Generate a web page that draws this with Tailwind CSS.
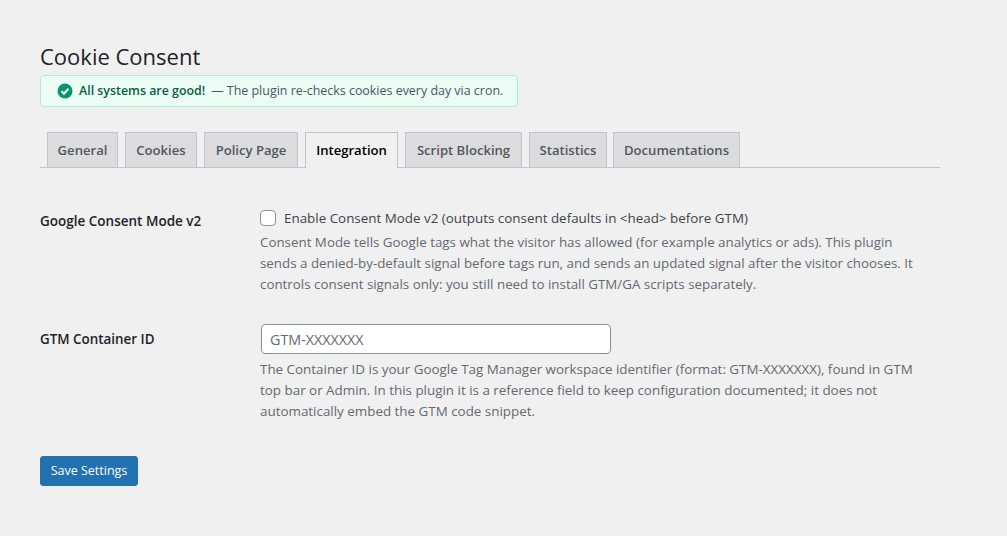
<!DOCTYPE html>
<html lang="en">
<head>
    <title>Cookie Consent</title>
    <script src="https://cdn.jsdelivr.net/npm/@tailwindcss/browser@4"></script>
</head>
<body class="bg-[#f0f0f1] text-[#3c434a] font-['Open_Sans','Noto_Sans',sans-serif] text-[13px] h-[536px] overflow-hidden">
    <div class="w-[900px] ml-[40px] pt-[42px]">
        <h1 class="text-[22px] leading-[29px] font-normal text-[#1d2327]">Cookie Consent</h1>

        <div class="mt-[4px] w-[478px] h-[32px] flex items-center pl-[16px] bg-[#ecfdf5] border border-[#a7f3d0] rounded-[4px] whitespace-nowrap">
            <svg class="w-[16px] h-[16px] shrink-0" viewBox="0 0 16 16">
                <circle cx="8" cy="8" r="7.5" fill="#059669"/>
                <path d="M4.5 8.3l2.4 2.4 4.6-5" fill="none" stroke="#fff" stroke-width="2"/>
            </svg>
            <strong class="ml-[6px] font-semibold text-[#065f46] text-[12.4px]">All systems are good!</strong>
            <span class="ml-[6px] text-[#4b5563] text-[12.45px]">— The plugin re-checks cookies every day via cron.</span>
        </div>

        <div class="mt-[25px] h-[36px] flex gap-[7px] pl-[7px] border-b border-[#c3c4c7] text-[13.1px] leading-[35px] font-semibold text-[#50575e] whitespace-nowrap">
            <a class="w-[71px] text-center h-[35px] bg-[#dcdcde] border border-[#c3c4c7] border-b-0">General</a>
            <a class="w-[72px] text-center h-[35px] bg-[#dcdcde] border border-[#c3c4c7] border-b-0">Cookies</a>
            <a class="w-[94px] text-center h-[35px] bg-[#dcdcde] border border-[#c3c4c7] border-b-0">Policy Page</a>
            <a class="w-[93px] text-center h-[36px] bg-[#f0f0f1] border border-[#c3c4c7] border-b-0 text-black">Integration</a>
            <a class="w-[117px] text-center h-[35px] bg-[#dcdcde] border border-[#c3c4c7] border-b-0">Script Blocking</a>
            <a class="w-[78px] text-center h-[35px] bg-[#dcdcde] border border-[#c3c4c7] border-b-0">Statistics</a>
            <a class="w-[127px] text-center h-[35px] bg-[#dcdcde] border border-[#c3c4c7] border-b-0 -ml-[1px]">Documentations</a>
        </div>

        <div class="mt-[40px] flex">
            <div class="w-[220px] pt-[4px] text-[13.5px] leading-[18px] font-semibold text-[#1d2327]">Google Consent Mode v2</div>
            <div class="w-[660px]">
                <label class="flex items-center h-[20px] text-[13.4px] text-[#3c434a] whitespace-nowrap">
                    <span class="w-[16px] h-[16px] bg-white border border-[#8c8f94] rounded-[4px] mr-[8px] shrink-0"></span>
                    Enable Consent Mode v2 (outputs consent defaults in &lt;head&gt; before GTM)
                </label>
                <p class="mt-[4px] text-[13.35px] leading-[21px] text-[#646970]">Consent Mode tells Google tags what the visitor has allowed (for example analytics or ads). This plugin sends a denied-by-default signal before tags run, and sends an updated signal after the visitor chooses. It controls consent signals only: you still need to install GTM/GA scripts separately.</p>
            </div>
        </div>

        <div class="mt-[29px] flex">
            <div class="w-[220px] pt-[6px] text-[13.4px] leading-[18px] font-semibold text-[#1d2327]">GTM Container ID</div>
            <div class="w-[660px]">
                <input class="block ml-[1px] w-[350px] h-[30px] px-[8px] bg-white border border-[#8c8f94] rounded-[4px] text-[14.3px] placeholder:text-[#646970]" placeholder="GTM-XXXXXXX">
                <p class="mt-[5px] text-[13.4px] leading-[21px] text-[#646970]">The Container ID is your Google Tag Manager workspace identifier (format: GTM-XXXXXXX), found in GTM top bar or Admin. In this plugin it is a reference field to keep configuration documented; it does not automatically embed the GTM code snippet.</p>
            </div>
        </div>

        <button class="mt-[34px] block w-[98px] h-[30px] pt-[1px] bg-[#2271b1] border border-[#2271b1] rounded-[3px] text-white text-[12.5px]">Save Settings</button>
    </div>
</body>
</html>
